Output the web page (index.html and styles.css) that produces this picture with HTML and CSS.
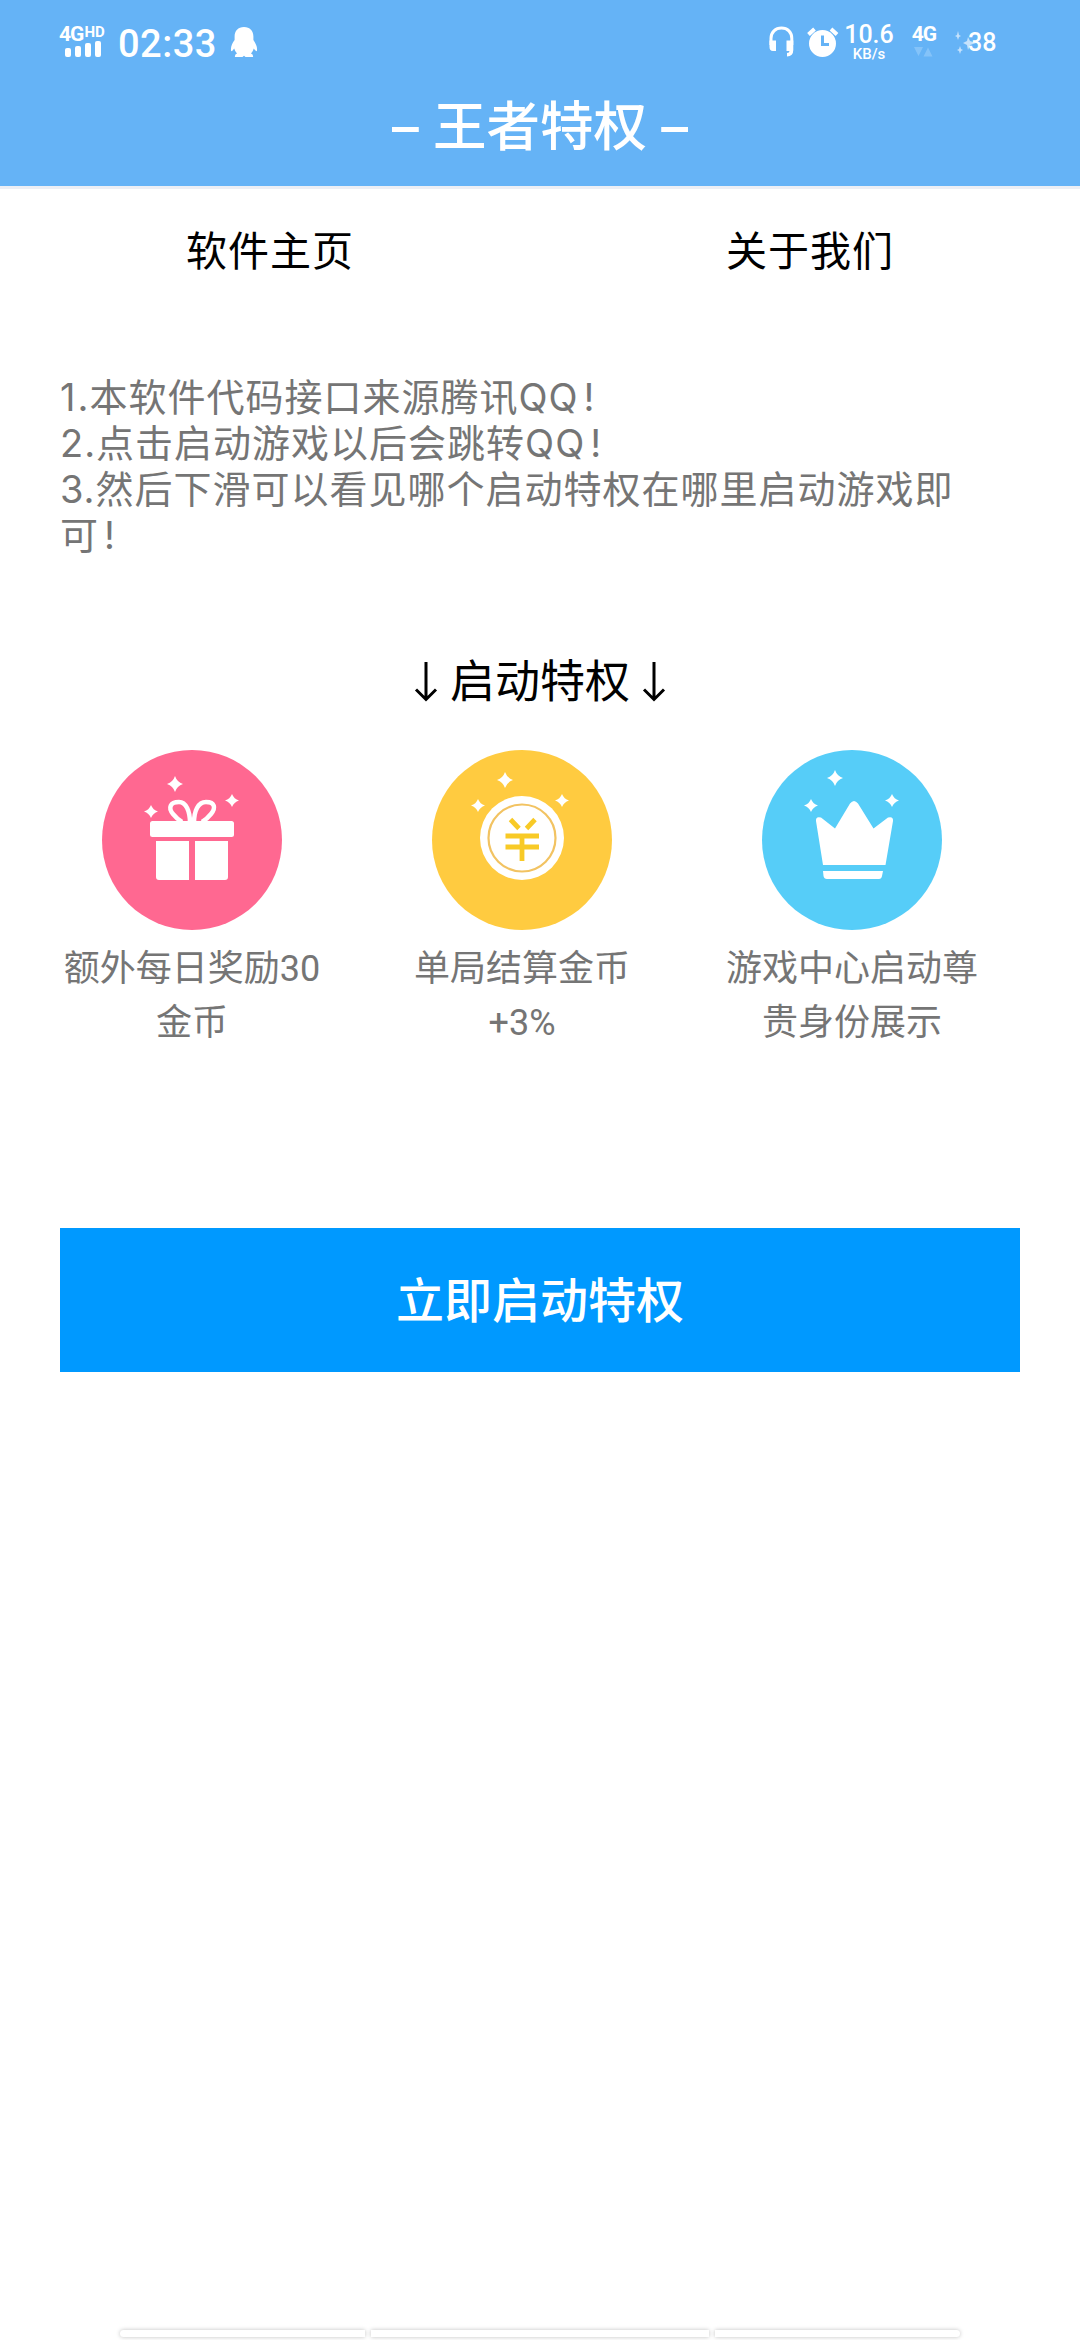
FILE: index.html
```
<!DOCTYPE html>
<html lang="zh-CN">
<head>
<meta charset="utf-8">
<title>王者特权</title>
<link rel="stylesheet" href="styles.css">
</head>
<body>
<div class="screen">
  <header class="header">
    <div class="status">
      <div class="status-left">
        <div class="carrier">
          <div class="net"><span class="net-main">4G</span><span class="net-hd">HD</span></div>
          <div class="bars"><i></i><i></i><i></i><i></i></div>
        </div>
        <span class="clock">02:33</span>
        <svg class="penguin" width="28" height="32" viewBox="0 0 28 32" fill="#fff"><path d="M14 1C8 1 4.600 5 4.600 10.500V14C2.500 17 .5 20.500 1 24.500Q1.500 26.500 4.200 22.500Q5 25.500 7 27.600Q4.500 28.500 5 31H12.500L14 29.800L15.500 31H23Q23.500 28.500 21 27.600Q23 25.500 23.800 22.500Q26.500 26.500 27 24.500C27.500 20.500 25.500 17 23.400 14V10.500C23.400 5 20 1 14 1Z"/></svg>
      </div>
      <div class="status-right">
        <svg class="headset" width="26" height="32" viewBox="0 0 26 32" fill="none"><path d="M2 19V12.500C2 6 6.500 2 12.500 2S22.800 6 22.800 12.500V19" stroke="#fff" stroke-width="3"/><path d="M.5 14.500H7V25H4Q.5 25 .5 21ZM17.500 14.500H24.300V24Q24.300 30 18 30.500V27Q20.500 27 20.500 25H17.500Z" fill="#fff"/></svg>
        <svg class="alarm" width="32" height="32" viewBox="0 0 32 32"><circle cx="15.500" cy="17.500" r="13.500" fill="#fff"/><path d="M1.500 8.500L7.500 3M24 3L30 8.500" stroke="#fff" stroke-width="4"/><path d="M15.500 9.500V18.500H22" fill="none" stroke="#65b3f6" stroke-width="3"/></svg>
        <div class="speed"><span class="speed-num">10.6</span><span class="speed-unit">KB/s</span></div>
        <div class="mobile"><span class="mobile-label">4G</span><svg width="20" height="10" viewBox="0 0 20 10" fill="#84c3f9"><path d="M0 0H9L4.500 9ZM9.500 9.500H18.500L14 .5Z"/></svg></div>
        <div class="battery"><svg class="spark" width="22" height="24" viewBox="0 0 22 24" fill="#c5e2fc"><path d="M3 0L4 4L6 5L4 6L3 9L2 6L0 5L2 4ZM5 15L6 18L8 19L6 20L5 23L4 20L2 19L4 18ZM13 6L15 10L21 12L15 14L13 19L12 14L8 12L12 10Z"/></svg><span class="level">38</span></div>
      </div>
    </div>
    <h1 class="title">– 王者特权 –</h1>
  </header>

  <nav class="tabs"><span class="tab">软件主页</span><span class="tab">关于我们</span></nav>

  <p class="notes"><span class="one">1</span>.本软件代码接口来源腾讯QQ<span class="bang">!</span><br>2.点击启动游戏以后会跳转QQ<span class="bang">!</span><br>3.然后下滑可以看见哪个启动特权在哪里启动游戏即可<span class="bang">!</span></p>

  <h2 class="heading"><svg width="24" height="44" viewBox="0 0 24 44" fill="none" stroke="#000" stroke-width="3"><path d="M12 2V40M2 29.500L12 39.500L22 29.500"/></svg><span>启动特权</span><svg width="24" height="44" viewBox="0 0 24 44" fill="none" stroke="#000" stroke-width="3"><path d="M12 2V40M2 29.500L12 39.500L22 29.500"/></svg></h2>

  <section class="perks">
    <div class="perk">
      <svg width="180" height="180" viewBox="0 0 180 180">
        <circle cx="90" cy="90" r="90" fill="#ff6891"/>
        <g fill="#fff"><path d="M73 26Q75 32 81 34Q75 36 73 42Q71 36 65 34Q71 32 73 26ZM130 44Q132 49 137 50.500Q132 52 130 57Q128 52 123 50.500Q128 49 130 44ZM49 55Q51 60 56 61.500Q51 63 49 68Q47 63 42 61.500Q47 60 49 55Z"/>
        <rect x="48" y="71" width="84" height="16" rx="2.500"/><path d="M54 91H87V130H57Q54 130 54 127ZM93 91H126V127Q126 130 123 130H93Z"/></g>
        <path d="M88 73C88 61 84 52 77 52C68 52 66 58 71 64Q75 69 80 72M92 73C92 61 96 52 104 52C113 52 114 58 109 64Q105 69 100 72" fill="none" stroke="#fff" stroke-width="4.500"/>
      </svg>
      <p class="perk-text">额外每日奖励30<br>金币</p>
    </div>
    <div class="perk">
      <svg width="180" height="180" viewBox="0 0 180 180">
        <circle cx="90" cy="90" r="90" fill="#ffcb40"/>
        <path fill="#fff" d="M73 22Q75 28 81 30Q75 32 73 38Q71 32 65 30Q71 28 73 22ZM130 44Q132 49 137 50.500Q132 52 130 57Q128 52 123 50.500Q128 49 130 44ZM46 49Q48 54 53 55.500Q48 57 46 62Q44 57 39 55.500Q44 54 46 49Z"/>
        <circle cx="90" cy="88" r="42" fill="#fff"/><circle cx="90" cy="88" r="33.500" fill="none" stroke="#f2c362" stroke-width="2.200"/>
        <path d="M78.500 69.500L87 78.500M103 69.500L94.500 78.500M73.500 86H107M73.500 97H107M90 85V111" fill="none" stroke="#f8ca26" stroke-width="4.800"/>
      </svg>
      <p class="perk-text">单局结算金币<br>+3%</p>
    </div>
    <div class="perk">
      <svg width="180" height="180" viewBox="0 0 180 180">
        <circle cx="90" cy="90" r="90" fill="#56cdf8"/>
        <g fill="#fff"><path d="M73 20Q75 26 81 28Q75 30 73 36Q71 30 65 28Q71 26 73 20ZM130 44Q132 49 137 50.500Q132 52 130 57Q128 52 123 50.500Q128 49 130 44ZM49 49Q51 54 56 55.500Q51 57 49 62Q47 57 42 55.500Q47 54 49 49Z"/>
        <path d="M61 115L54 71Q53.500 66 59 67.500L73 78.500L88 53.500Q92 48.500 96 53.500L111.500 78.500L126 67.500Q131.500 66 131 71L123.500 115ZM61 121H121L120 126Q119.500 129 117 129H65Q62 129 61.500 126Z"/></g>
      </svg>
      <p class="perk-text">游戏中心启动尊<br>贵身份展示</p>
    </div>
  </section>

  <button class="launch">立即启动特权</button>

  <footer class="dock"><i class="dock-side dock-first"></i><i class="dock-mid"></i><i class="dock-side dock-last"></i></footer>
</div>
</body>
</html>
```
FILE: styles.css
```
* { box-sizing: border-box; }
body { margin: 0; background: #fff; }
p, h1, h2 { margin: 0; font-weight: 400; }
svg { display: block; flex: none; }

.screen {
  width: 1080px;
  height: 2340px;
  display: flex;
  flex-direction: column;
  font-family: Inter, "Noto Sans CJK SC", sans-serif;
  color: #757575;
  overflow: hidden;
}

.header { height: 189px; flex: none; background: #65b3f6; border-bottom: 3px solid #eceff5; color: #fff; }
.status { height: 84px; display: flex; justify-content: space-between; padding: 0 84px 0 59px; font-family: Roboto, sans-serif; }
.status-left, .status-right { display: flex; align-items: flex-start; }

.carrier { width: 48px; padding-top: 26px; }
.net { display: flex; align-items: flex-start; gap: 1px; height: 18px; font-weight: 700; }
.net-main { font-size: 21px; line-height: 17px; letter-spacing: -1px; }
.net-hd { font-size: 15px; line-height: 12px; }
.bars { display: flex; align-items: flex-end; gap: 4px; height: 13px; padding-left: 6px; }
.bars i { width: 6px; border-radius: 2px; background: #fff; height: 9px; }
.bars i:nth-child(2) { height: 11px; }
.bars i:nth-child(3) { height: 14px; }
.bars i:nth-child(4) { height: 16px; }
.clock { width: 100px; margin: 24px 0 0 11px; font-size: 38px; line-height: 40px; font-weight: 500; letter-spacing: .5px; }
.penguin { margin: 26px 0 0 12px; }

.headset { margin-top: 26px; }
.alarm { margin: 26px 0 0 12px; }
.speed { width: 52px; margin: 22px 0 0 4px; display: flex; flex-direction: column; align-items: center; white-space: nowrap; }
.speed-num { font-size: 25px; line-height: 25px; font-weight: 500; }
.speed-unit { font-size: 15px; line-height: 14px; font-weight: 500; }
.mobile { width: 26px; margin: 26px 0 0 16px; display: flex; flex-direction: column; align-items: center; gap: 4px; }
.mobile-label { font-size: 21px; line-height: 17px; font-weight: 700; letter-spacing: -1px; }
.battery { margin: 31px 0 0 18px; display: flex; }
.level { width: 28px; margin-left: -9px; font-size: 25px; line-height: 24px; font-weight: 500; }

.title { font-size: 53.500px; line-height: 86px; font-weight: 500; text-align: center; }

.tabs { display: flex; height: 126px; flex: none; }
.tab { flex: 1; text-align: center; font-size: 41px; letter-spacing: 1px; line-height: 125px; color: #000; }

.notes { margin: 59px 110px 0 60px; font-size: 38px; letter-spacing: 1px; line-height: 46px; }
.one { margin-right: 1px; }
.bang { margin-left: 5px; }

.heading { display: flex; justify-content: center; align-items: center; gap: 12px; margin-top: 91px; height: 66px; font-size: 45px; line-height: 66px; color: #000; }

.perks { display: flex; gap: 66px; margin: 35px 96px 0 60px; }
.perk { flex: 1; display: flex; flex-direction: column; align-items: center; }
.perk-text { margin-top: 12px; font-family: Roboto, "Noto Sans CJK SC", sans-serif; font-size: 36px; line-height: 54px; text-align: center; white-space: nowrap; }

.launch { margin: 178px 60px 0; height: 144px; flex: none; padding: 0; border: 0; background: #0099ff; color: #fff; font: 500 48px/146px Inter, "Noto Sans CJK SC", sans-serif; }

.dock { margin-top: auto; display: flex; gap: 6px; padding: 0 120px 3px; }
.dock i { height: 7px; background: #fff; box-shadow: 0 0 4px rgba(0, 0, 0, .25); }
.dock-side { width: 245px; }
.dock-mid { flex: 1; }
.dock-first { border-radius: 4px 0 0 4px; }
.dock-last { border-radius: 0 4px 4px 0; }
```
